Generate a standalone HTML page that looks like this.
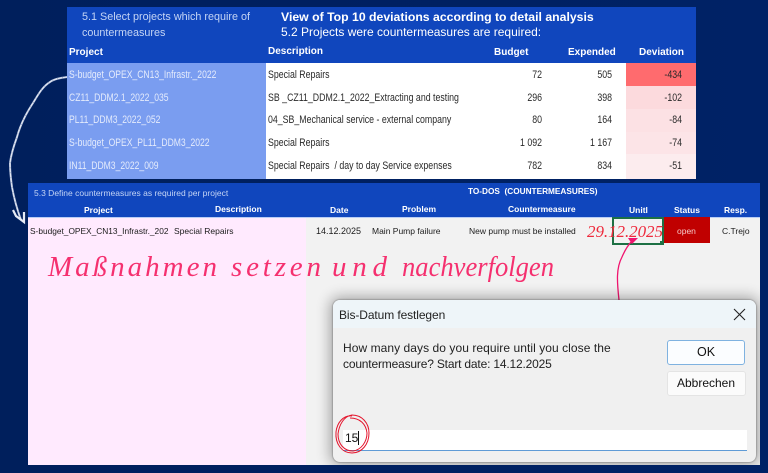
<!DOCTYPE html>
<html><head><meta charset="utf-8"><style>
html,body{margin:0;padding:0;width:768px;height:473px;overflow:hidden;background:#002060}
body{position:relative;font-family:"Liberation Sans",sans-serif}
div{position:absolute}
.t{position:absolute;white-space:nowrap;line-height:1}
.w{color:#fff;font-weight:bold}
.k{color:#2a2a2a;font-size:10.6px;transform:scaleX(.83);transform-origin:left center}
.p{color:#e4ebfc;font-size:10.6px;transform:scaleX(.81);transform-origin:left center}
.r{text-align:right;transform-origin:right center}
.c{text-align:center}
.d{color:#1c1c1c;font-size:8.5px}
</style></head><body>
<div style="left:0;top:0;width:768px;height:473px;background:linear-gradient(90deg,#001f5c,#002266)"></div>

<div style="left:67px;top:7px;width:629px;height:172px;background:#1046bd"></div>
<div style="left:67px;top:63px;width:199px;height:116px;background:#7a9df0"></div>
<div style="left:266px;top:63px;width:360px;height:116px;background:#fff"></div>
<div style="left:626px;top:63px;width:70px;height:23px;background:#ff6b6e"></div>
<div style="left:626px;top:86px;width:70px;height:23px;background:#fcdadd"></div>
<div style="left:626px;top:109px;width:70px;height:23px;background:#fce1e4"></div>
<div style="left:626px;top:132px;width:70px;height:22px;background:#fce4e7"></div>
<div style="left:626px;top:154px;width:70px;height:25px;background:#fcecee"></div>

<span class="t" style="left:82px;top:12px;font-size:10.8px;color:#c5d5f5">5.1 Select projects which require of</span>
<span class="t" style="left:82px;top:28px;font-size:10.8px;color:#c5d5f5">countermeasures</span>
<span class="t w" style="left:281px;top:11px;font-size:12.25px">View of Top 10 deviations according to detail analysis</span>
<span class="t" style="left:281px;top:26px;font-size:12px;color:#fff">5.2 Projects were countermeasures are required:</span>
<span class="t w" style="left:69px;top:48px;font-size:10px">Project</span>
<span class="t w" style="left:268px;top:47px;font-size:10px">Description</span>
<span class="t w" style="left:494px;top:48px;font-size:10px">Budget</span>
<span class="t w" style="left:568px;top:48px;font-size:10px">Expended</span>
<span class="t w" style="left:639px;top:48px;font-size:10px">Deviation</span>

<span class="t p" style="left:69px;top:70px">S-budget_OPEX_CN13_Infrastr._2022</span>
<span class="t p" style="left:69px;top:93px">CZ11_DDM2.1_2022_035</span>
<span class="t p" style="left:69px;top:115px">PL11_DDM3_2022_052</span>
<span class="t p" style="left:69px;top:138px">S-budget_OPEX_PL11_DDM3_2022</span>
<span class="t p" style="left:69px;top:161px">IN11_DDM3_2022_009</span>

<span class="t k" style="left:268px;top:70px">Special Repairs</span>
<span class="t k" style="left:268px;top:93px">SB _CZ11_DDM2.1_2022_Extracting and testing</span>
<span class="t k" style="left:268px;top:115px">04_SB_Mechanical service - external company</span>
<span class="t k" style="left:268px;top:138px">Special Repairs</span>
<span class="t k" style="left:268px;top:161px">Special Repairs&nbsp; / day to day Service expenses</span>

<span class="t k r" style="left:500px;width:42px;top:70px">72</span>
<span class="t k r" style="left:500px;width:42px;top:93px">296</span>
<span class="t k r" style="left:500px;width:42px;top:115px">80</span>
<span class="t k r" style="left:500px;width:42px;top:138px">1 092</span>
<span class="t k r" style="left:500px;width:42px;top:161px">782</span>
<span class="t k r" style="left:570px;width:42px;top:70px">505</span>
<span class="t k r" style="left:570px;width:42px;top:93px">398</span>
<span class="t k r" style="left:570px;width:42px;top:115px">164</span>
<span class="t k r" style="left:570px;width:42px;top:138px">1 167</span>
<span class="t k r" style="left:570px;width:42px;top:161px">834</span>
<span class="t k r" style="left:640px;width:42px;top:70px">-434</span>
<span class="t k r" style="left:640px;width:42px;top:93px">-102</span>
<span class="t k r" style="left:640px;width:42px;top:115px">-84</span>
<span class="t k r" style="left:640px;width:42px;top:138px">-74</span>
<span class="t k r" style="left:640px;width:42px;top:161px">-51</span>

<div style="left:28px;top:183px;width:732px;height:34px;background:#1046bd"></div>
<div style="left:28px;top:217px;width:278px;height:248px;background:#ffeafe"></div>
<div style="left:306px;top:217px;width:454px;height:248px;background:#f2f2f2"></div>
<div style="left:28px;top:217px;width:732px;height:1px;background:#b9cdf5"></div>

<span class="t" style="left:34px;top:189px;font-size:8.5px;color:#c5d5f5">5.3 Define countermeasures as required per project</span>
<span class="t w" style="left:468px;top:188px;font-size:8.25px">TO-DOS&nbsp; (COUNTERMEASURES)</span>
<span class="t w" style="left:84px;top:206px;font-size:8.5px">Project</span>
<span class="t w" style="left:215px;top:205px;font-size:8.5px">Description</span>
<span class="t w" style="left:330px;top:206px;font-size:8.5px">Date</span>
<span class="t w" style="left:402px;top:205px;font-size:8.5px">Problem</span>
<span class="t w" style="left:508px;top:205px;font-size:8.5px">Countermeasure</span>
<span class="t w" style="left:629px;top:206px;font-size:8.5px">Unitl</span>
<span class="t w" style="left:674px;top:206px;font-size:8.5px">Status</span>
<span class="t w" style="left:724px;top:206px;font-size:8.5px">Resp.</span>

<span class="t d" style="left:30px;top:227px;transform:scaleX(.98);transform-origin:left center">S-budget_OPEX_CN13_Infrastr._202</span>
<span class="t d" style="left:174px;top:227px">Special Repairs</span>
<span class="t d" style="left:316px;top:227px;font-size:9px">14.12.2025</span>
<span class="t d" style="left:372px;top:227px">Main Pump failure</span>
<span class="t d" style="left:469px;top:227px">New pump must be installed</span>
<div style="left:663px;top:217px;width:47px;height:26px;background:#c00000"></div>
<span class="t" style="left:677px;top:227px;font-size:8.5px;color:#f4c7c7">open</span>
<span class="t d" style="left:722px;top:227px">C.Trejo</span>
<div style="left:612px;top:217px;width:48px;height:24px;border:2px solid #1d7044"></div>
<div style="left:660px;top:241px;width:4px;height:4px;background:#1d7044"></div>

<svg width="768" height="473" style="position:absolute;left:0;top:0" xmlns="http://www.w3.org/2000/svg">
<path d="M67 77C60 78 54 79 50 82C42 87 38 95 33 103C25 115 20 126 17 137C13 148 11 155 10 163C10 172 11 180 12 187C14 198 17 209 21 220" fill="none" stroke="#a9b6d2" stroke-width="2"/>
<path d="M67 77C60 78 54 79 50 82C42 87 38 95 33 103C25 115 20 126 17 137C13 148 11 155 10 163C10 172 11 180 12 187C14 198 17 209 21 220" fill="none" stroke="#e3e8f3" stroke-width="1.1" stroke-dasharray="4 1"/>
<path d="M13 210L16 216L24 222L24 212" fill="none" stroke="#e6ebf5" stroke-width="2.2"/>
<g font-family="Liberation Serif" font-style="italic" font-size="29" fill="#f5306f">
<text x="48" y="276" textLength="169" lengthAdjust="spacing">Maßnahmen</text>
<text x="231" y="276" textLength="90" lengthAdjust="spacing">setzen</text>
<text x="332" y="276" textLength="55" lengthAdjust="spacing">und</text>
<text x="402" y="276" textLength="152" lengthAdjust="spacingAndGlyphs">nachverfolgen</text>
</g>
<text x="587" y="237" font-family="Liberation Serif" font-style="italic" font-size="17" fill="#ee2a3c" textLength="76" lengthAdjust="spacing">29.12.2025</text>
<path d="M619 300C617 282 616 268 622 257C625 250 628 245 632 241" fill="none" stroke="#f0146e" stroke-width="1.3"/>
<path d="M628 238L638 238L632 244Z" fill="#f0146e"/>
</svg>

<div style="left:306px;top:217px;width:454px;height:248px;overflow:hidden">
<div style="left:27px;top:83px;width:423px;height:162px;border-radius:7px;background:#f0f0f0;box-shadow:0 0 14px 3px rgba(0,0,0,.33),0 0 1px 1px rgba(0,0,0,.18);overflow:hidden">
<div style="left:0;top:0;width:423px;height:28px;background:#eef5f9"></div>
</div>
</div>
<span class="t" style="left:339px;top:309px;font-size:12px;color:#222;letter-spacing:-.1px">Bis-Datum festlegen</span>
<svg width="14" height="14" style="position:absolute;left:733px;top:308px"><path d="M1 1L12 12M12 1L1 12" stroke="#222" stroke-width="1.1" fill="none"/></svg>
<span class="t" style="left:343px;top:342px;font-size:12px;color:#222;letter-spacing:.06px">How many days do you require until you close the</span>
<span class="t" style="left:343px;top:358px;font-size:12px;color:#222;letter-spacing:-.18px">countermeasure? Start date: 14.12.2025</span>
<div style="left:667px;top:340px;width:76px;height:23px;background:#fbfdff;border:1px solid #7fb2e0;border-radius:3px"></div>
<span class="t c" style="left:667px;width:78px;top:346px;font-size:12.5px;color:#111">OK</span>
<div style="left:667px;top:371px;width:77px;height:23px;background:#fbfbfb;border:1px solid #e4e4e4;border-radius:3px"></div>
<span class="t c" style="left:667px;width:78px;top:377px;font-size:12px;color:#111">Abbrechen</span>
<div style="left:343px;top:430px;width:404px;height:20px;background:#fff;border-bottom:1px solid #5f9bd6"></div>
<span class="t" style="left:345px;top:432px;font-size:12px;color:#111">15</span>
<div style="left:358px;top:431px;width:1px;height:14px;background:#111"></div>
<svg width="768" height="473" style="position:absolute;left:0;top:0"><path d="M352 416C343 415 337 423 336 432C335 444 342 453 352 453C362 453 369 444 369 433C369 423 362 415 352 415C344 416 339 425 338 434C338 444 344 451 353 451C361 450 367 442 367 433C366 424 360 418 350 418" fill="none" stroke="#e4142c" stroke-width="1"/></svg>
</body></html>
